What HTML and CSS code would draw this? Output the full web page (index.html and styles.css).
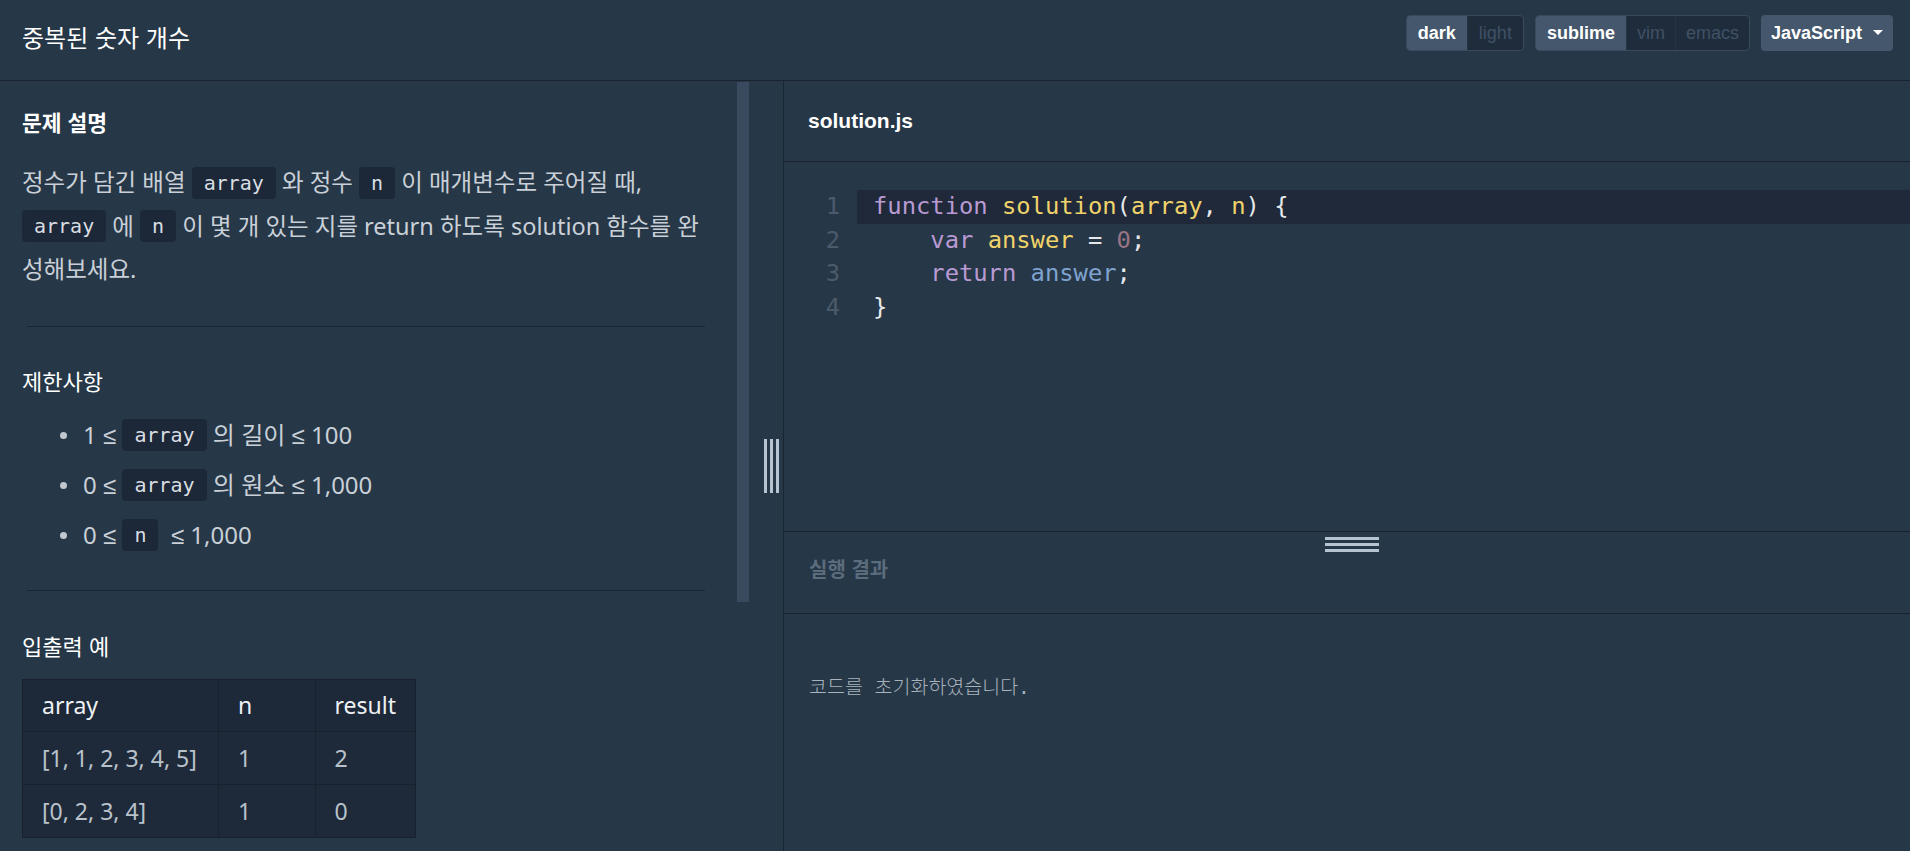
FILE: index.html
```html
<!DOCTYPE html>
<html lang="ko">
<head>
<meta charset="utf-8">
<title>중복된 숫자 개수</title>
<link rel="stylesheet" href="styles.css">
</head>
<body>
<header class="topbar">
  <h1 class="title">중복된 숫자 개수</h1>
  <div class="controls">
    <div class="seg">
      <span class="seg-btn active">dark</span><span class="seg-btn">light</span>
    </div>
    <div class="seg">
      <span class="seg-btn active">sublime</span><span class="seg-btn tight">vim</span><span class="seg-btn tight">emacs</span>
    </div>
    <div class="dropdown"><span>JavaScript</span><span class="caret"></span></div>
  </div>
</header>
<main class="workspace">
  <section class="guide">
    <div class="guide-content">
      <h2 class="sec-title strong">문제 설명</h2>
      <p class="desc">정수가 담긴 배열 <code>array</code> 와 정수 <code>n</code> 이 매개변수로 주어질 때, <code>array</code> 에 <code>n</code> 이 몇 개 있는 지를 return 하도록 solution 함수를 완<br>성해보세요.</p>
      <hr class="sep sep-1">
      <h2 class="sec-title sec-limits">제한사항</h2>
      <ul class="limits">
        <li>1 ≤ <code>array</code> 의 길이 ≤ 100</li>
        <li>0 ≤ <code>array</code> 의 원소 ≤ 1,000</li>
        <li>0 ≤ <code>n</code> &nbsp;≤ 1,000</li>
      </ul>
      <hr class="sep sep-2">
      <h2 class="sec-title sec-examples">입출력 예</h2>
      <table class="examples">
        <thead>
          <tr><th class="c1">array</th><th class="c2">n</th><th class="c3">result</th></tr>
        </thead>
        <tbody>
          <tr><td>[1, 1, 2, 3, 4, 5]</td><td>1</td><td>2</td></tr>
          <tr><td>[0, 2, 3, 4]</td><td>1</td><td>0</td></tr>
        </tbody>
      </table>
    </div>
    <div class="scrollbar"><div class="thumb"></div></div>
  </section>
  <div class="splitter">
    <svg class="vhandle" width="15" height="54" viewBox="0 0 15 54"><rect x="0" y="0" width="3" height="54"/><rect x="6" y="0" width="3" height="54"/><rect x="12" y="0" width="3" height="54"/></svg>
  </div>
  <section class="code-section">
    <div class="editor-head">solution.js</div>
    <div class="editor">
      <div class="line active"><span class="ln">1</span><span class="src"><span class="kw">function</span> <span class="def">solution</span>(<span class="def">array</span>, <span class="def">n</span>) {</span></div>
      <div class="line"><span class="ln">2</span><span class="src">    <span class="kw">var</span> <span class="def">answer</span> = <span class="num">0</span>;</span></div>
      <div class="line"><span class="ln">3</span><span class="src">    <span class="kw">return</span> <span class="var2">answer</span>;</span></div>
      <div class="line"><span class="ln">4</span><span class="src">}</span></div>
    </div>
    <div class="result-head">
      <svg class="hhandle" width="54" height="15" viewBox="0 0 54 15"><rect x="0" y="0" width="54" height="3"/><rect x="0" y="6" width="54" height="3"/><rect x="0" y="12" width="54" height="3"/></svg>
      <span class="result-title">실행 결과</span>
    </div>
    <div class="result-body">코드를 초기화하였습니다.</div>
  </section>
</main>
</body>
</html>
```

FILE: styles.css
```css
* { box-sizing: border-box; }

html, body {
  margin: 0;
  padding: 0;
  width: 1910px;
  height: 851px;
  overflow: hidden;
  background: #263747;
  font-family: "Noto Sans", "Liberation Sans", "Noto Sans CJK KR", sans-serif;
  color: #c9d0d7;
}

/* top bar */
.topbar {
  height: 81px;
  border-bottom: 1px solid #18232f;
  display: flex;
  justify-content: space-between;
  align-items: flex-start;
  padding: 0 17px 0 22px;
}

.title {
  margin: 21px 0 0;
  font-family: "Noto Sans CJK KR", sans-serif;
  font-size: 24px;
  line-height: 32px;
  font-weight: 400;
  color: #ffffff;
}

.controls {
  display: flex;
  gap: 11px;
  margin-top: 15px;
}

.seg {
  display: flex;
  height: 36px;
  border-radius: 4px;
  overflow: hidden;
  border: 1px solid #3a4a5d;
  background: #1f2c3c;
}

.seg-btn {
  display: flex;
  align-items: center;
  padding: 0 11px;
  font-family: "Liberation Sans", Arial, sans-serif;
  font-size: 18px;
  color: #3f5165;
}

.seg-btn.tight { padding: 0 10px; }

.seg-btn + .seg-btn { border-left: 1px solid #33435560; }

.seg-btn.active {
  background: #44576c;
  color: #ffffff;
  font-weight: 700;
}

.dropdown {
  display: flex;
  align-items: center;
  gap: 11px;
  height: 36px;
  padding: 0 10px;
  border-radius: 4px;
  background: #44576c;
  color: #ffffff;
  font-family: "Liberation Sans", Arial, sans-serif;
  font-size: 18px;
  font-weight: 700;
}

.caret {
  width: 0;
  height: 0;
  border-left: 5px solid transparent;
  border-right: 5px solid transparent;
  border-top: 5px solid #ffffff;
  margin-top: -2px;
}

/* workspace */
.workspace {
  display: flex;
  height: 770px;
}

.guide {
  width: 749px;
  display: flex;
  flex: none;
}

.guide-content {
  width: 737px;
  padding: 26px 25px 0 22px;
  overflow: hidden;
}

.sec-title {
  margin: 0;
  font-family: "Noto Sans CJK KR", sans-serif;
  font-size: 22px;
  line-height: 30px;
  font-weight: 400;
  color: #ffffff;
}

.sec-title.strong { font-size: 21.5px; font-weight: 700; }

.desc {
  margin: 24px 0 0;
  font-size: 23.5px;
  line-height: 43.5px;
  color: #c9d0d7;
}

code {
  display: inline-block;
  font-family: "DejaVu Sans Mono", monospace;
  font-size: 20px;
  line-height: 32px;
  padding: 0 12px;
  background: #1c2737;
  border-radius: 4px;
  color: #d9dee3;
  vertical-align: middle;
  position: relative;
  top: -2px;
}

.sep {
  border: 0;
  border-top: 1px solid #1b2634;
  margin: 34px 7px 0 5px;
  height: 0;
}

.sec-limits { margin-top: 38px; }

.limits {
  list-style: none;
  margin: 15px 0 0;
  padding: 0;
}

.limits li {
  font-size: 24px;
  line-height: 50px;
  padding-left: 38px;
  color: #c9d0d7;
}

.limits li::before {
  content: "";
  display: inline-block;
  width: 7px;
  height: 7px;
  border-radius: 50%;
  background: #c0c7cf;
  margin-right: 16px;
  vertical-align: middle;
  position: relative;
  top: -2px;
}

.sep-2 { margin-top: 30px; }

.sec-examples { margin-top: 39px; }

.examples {
  margin-top: 19px;
  border-collapse: collapse;
  font-family: "Noto Sans", sans-serif;
  font-size: 23px;
  width: 394px;
  background: #1e2a3a;
}

.examples th, .examples td {
  border: 1px solid #18212d;
  padding: 0 19px;
  text-align: left;
  font-weight: 400;
}

.examples th {
  height: 52px;
  color: #eef1f4;
  background: #1d2838;
}

.examples td {
  height: 53px;
  color: #b9c2cb;
}

.examples .c1 { width: 197px; }
.examples .c2 { width: 97px; }
.examples .c3 { width: 100px; }

.scrollbar {
  width: 12px;
  flex: none;
  padding-top: 1px;
}

.thumb {
  height: 520px;
  background: #3a4a5e;
}

.splitter {
  width: 35px;
  flex: none;
  display: flex;
  align-items: center;
  justify-content: center;
  padding-left: 10px;
  border-right: 1px solid #1a2532;
}

.vhandle rect { fill: #b6c3d0; }

/* code section */
.code-section {
  flex: 1;
  display: flex;
  flex-direction: column;
}

.editor-head {
  height: 81px;
  border-bottom: 1px solid #18232f;
  display: flex;
  align-items: center;
  padding: 0 0 1px 24px;
  font-family: "Liberation Sans", Arial, sans-serif;
  font-size: 21px;
  font-weight: 700;
  color: #ffffff;
}

.editor {
  height: 370px;
  border-bottom: 1px solid #18232f;
  padding-top: 28px;
  font-family: "DejaVu Sans Mono", monospace;
  font-size: 23.8px;
  line-height: 33.6px;
  color: #e6e8ea;
}

.line {
  display: flex;
  height: 33.6px;
}

.ln {
  width: 73px;
  flex: none;
  text-align: right;
  padding-right: 17px;
  color: #4b5b6b;
}

.src {
  flex: 1;
  padding-left: 16px;
  white-space: pre;
}

.line.active .src { background: #1f2939; }

.kw { color: #b99ad3; }
.def { color: #f0d36a; }
.num { color: #9a7585; }
.var2 { color: #7fa3cf; }

.result-head {
  position: relative;
  height: 82px;
  border-bottom: 1px solid #18232f;
  display: flex;
  align-items: center;
  padding: 0 0 8px 25px;
}

.hhandle {
  position: absolute;
  top: 5px;
  left: 541px;
}

.hhandle rect { fill: #b6c3d0; }

.result-title {
  font-family: "Noto Sans CJK KR", sans-serif;
  font-size: 20px;
  font-weight: 700;
  color: #5b6c7d;
}

.result-body {
  padding: 61px 0 0 25px;
  font-family: "DejaVu Sans Mono", "Noto Sans CJK KR", monospace;
  font-size: 19.5px;
  line-height: 26px;
  font-weight: 300;
  color: #a9b3bd;
}
```
